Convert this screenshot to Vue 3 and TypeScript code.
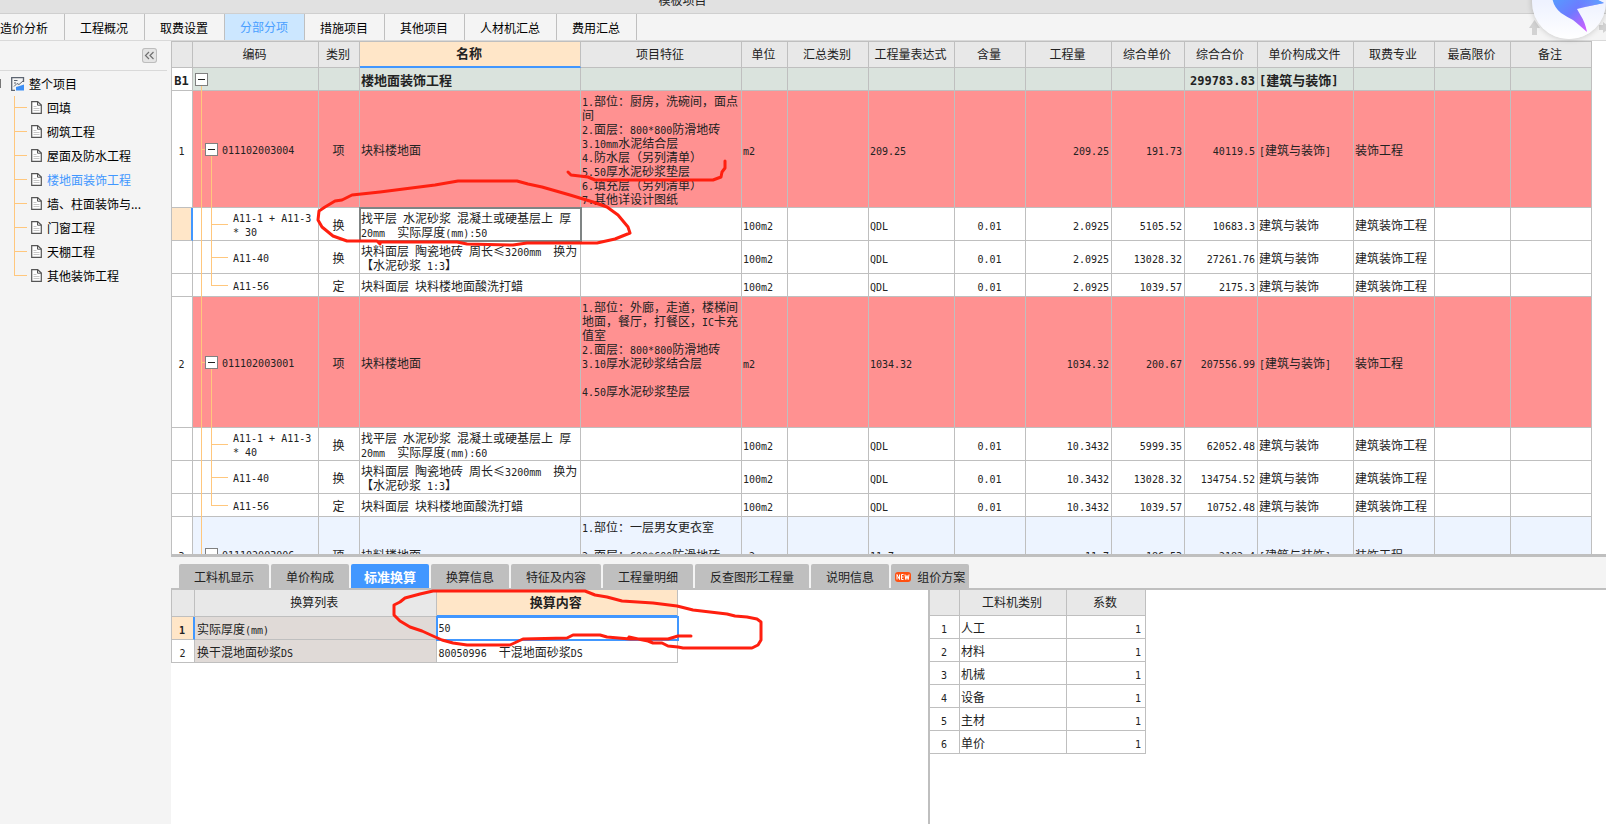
<script setup lang="ts">
import { h, ref, type FunctionalComponent } from 'vue'

type Kind = 'section' | 'item' | 'quota' | 'plain'

interface Column {
  key: string
  label: string
  width: number
  align: 'left' | 'center' | 'right'
}

interface Row {
  no: string
  kind: Kind
  last?: boolean
  selected?: boolean
  cells: Record<string, string>
}

/* Sets Latin runs in the half-width face beside full-width characters. */
const Mixed: FunctionalComponent<{ text: string }> = (props) =>
  (props.text.match(/[\x20-\x7e]+|[^\x20-\x7e]+/g) ?? []).map((run) =>
    /^[\x20-\x7e]/.test(run) ? h('span', { class: 'half' }, run) : run,
  )
Mixed.props = ['text']

const topTabs = ['造价分析', '工程概况', '取费设置', '分部分项', '措施项目', '其他项目', '人材机汇总', '费用汇总']
const activeTop = ref('分部分项')

const tree = ['回填', '砌筑工程', '屋面及防水工程', '楼地面装饰工程', '墙、柱面装饰与...', '门窗工程', '天棚工程', '其他装饰工程']
const activeNode = ref('楼地面装饰工程')

const columns: Column[] = [
  { key: 'code', label: '编码', width: 126, align: 'left' },
  { key: 'type', label: '类别', width: 41, align: 'center' },
  { key: 'name', label: '名称', width: 221, align: 'left' },
  { key: 'feature', label: '项目特征', width: 161, align: 'left' },
  { key: 'unit', label: '单位', width: 46, align: 'left' },
  { key: 'group', label: '汇总类别', width: 81, align: 'left' },
  { key: 'expr', label: '工程量表达式', width: 86, align: 'left' },
  { key: 'content', label: '含量', width: 71, align: 'center' },
  { key: 'qty', label: '工程量', width: 86, align: 'right' },
  { key: 'price', label: '综合单价', width: 73, align: 'right' },
  { key: 'total', label: '综合合价', width: 73, align: 'right' },
  { key: 'file', label: '单价构成文件', width: 96, align: 'left' },
  { key: 'major', label: '取费专业', width: 81, align: 'left' },
  { key: 'limit', label: '最高限价', width: 76, align: 'left' },
  { key: 'note', label: '备注', width: 81, align: 'left' },
]

const item = (code: string, feature: string, qty: string, price: string, total: string) => ({
  code, type: '项', name: '块料楼地面', feature, unit: 'm2', expr: qty, qty, price, total,
  file: '[建筑与装饰]', major: '装饰工程',
})
const quota = (code: string, type: string, name: string, qty: string, price: string, total: string) => ({
  code, type, name, unit: '100m2', expr: 'QDL', content: '0.01', qty, price, total,
  file: '建筑与装饰', major: '建筑装饰工程',
})

const levelling = '找平层 水泥砂浆 混凝土或硬基层上 厚20mm  实际厚度(mm):'
const tiling = '块料面层 陶瓷地砖 周长≤3200mm  换为【水泥砂浆 1:3】'
const waxing = '块料面层 块料楼地面酸洗打蜡'

const rows: Row[] = [
  { no: 'B1', kind: 'section', cells: { name: '楼地面装饰工程', total: '299783.83', file: '[建筑与装饰]' } },
  {
    no: '1', kind: 'item',
    cells: item('011102003004', '1.部位：厨房，洗碗间，面点间\n2.面层：800*800防滑地砖\n3.10mm水泥结合层\n4.防水层（另列清单）\n5.50厚水泥砂浆垫层\n6.填充层（另列清单）\n7.其他详设计图纸', '209.25', '191.73', '40119.5'),
  },
  { no: '', kind: 'quota', selected: true, cells: quota('A11-1 + A11-3 * 30', '换', levelling + '50', '2.0925', '5105.52', '10683.3') },
  { no: '', kind: 'quota', cells: quota('A11-40', '换', tiling, '2.0925', '13028.32', '27261.76') },
  { no: '', kind: 'quota', last: true, cells: quota('A11-56', '定', waxing, '2.0925', '1039.57', '2175.3') },
  {
    no: '2', kind: 'item',
    cells: item('011102003001', '1.部位：外廊，走道，楼梯间地面，餐厅，打餐区，IC卡充值室\n2.面层：800*800防滑地砖\n3.10厚水泥砂浆结合层\n\n4.50厚水泥砂浆垫层\n\n\n', '1034.32', '200.67', '207556.99'),
  },
  { no: '', kind: 'quota', cells: quota('A11-1 + A11-3 * 40', '换', levelling + '60', '10.3432', '5999.35', '62052.48') },
  { no: '', kind: 'quota', cells: quota('A11-40', '换', tiling, '10.3432', '13028.32', '134754.52') },
  { no: '', kind: 'quota', last: true, cells: quota('A11-56', '定', waxing, '10.3432', '1039.57', '10752.48') },
  {
    no: '3', kind: 'plain',
    cells: item('011102003006', '1.部位：一层男女更衣室\n\n2.面层：600*600防滑地砖\n\n\n', '11.7', '186.53', '2182.4'),
  },
]

const lowerTabs = ['工料机显示', '单价构成', '标准换算', '换算信息', '特征及内容', '工程量明细', '反查图形工程量', '说明信息', '组价方案']
const activeLower = ref('标准换算')
const thickness = ref('50')
const factors = ['人工', '材料', '机械', '设备', '主材', '单价']
</script>

<template>
  <div class="app">
    <header class="title-bar"><span class="title">模板项目</span></header>

    <nav class="top-tabs">
      <button
        v-for="tab in topTabs" :key="tab" type="button" class="top-tab"
        :class="{ active: tab === activeTop }" @click="activeTop = tab"
      >{{ tab }}</button>
      <div class="movers">
        <button type="button" class="mover" aria-label="上移">
          <svg width="11" height="15" viewBox="0 0 11 15"><path d="M5.500 0 11 8H8v7H3V8H0z" fill="#d2d2d2" /></svg>
        </button>
        <button type="button" class="mover" aria-label="右移">
          <svg width="11" height="15" viewBox="0 0 11 15"><path d="M0 5h4V2l7 5.500-7 5.500V10H0z" fill="#d2d2d2" /></svg>
        </button>
      </div>
    </nav>

    <div class="body">
      <aside class="sidebar">
        <div class="side-head">
          <button type="button" class="collapse" aria-label="折叠">
            <svg width="15" height="15" viewBox="0 0 15 15" fill="none" stroke="#707070" stroke-width="1.200">
              <path d="M7 4 3.500 7.500 7 11M11.500 4 8 7.500l3.500 3.500" />
            </svg>
          </button>
        </div>
        <button type="button" class="root-node">
          <i class="root-mark"></i>
          <svg width="14" height="14" viewBox="0 0 14 14" fill="none">
            <path d="M12.500 5V.700H.700v12.600H4" stroke="#5c6470" stroke-width="1.300" />
            <path d="M3 3.500h3.500M3 6h2M3 9.500l3-3 2 1L12 4" stroke="#5c6470" stroke-width="1" />
            <path d="M5 13.500V10l3.500-1L13 7.500v6z" fill="#3d8ff5" />
          </svg>
          <span>整个项目</span>
        </button>
        <ul class="tree">
          <li v-for="node in tree" :key="node">
            <button type="button" class="node" :class="{ active: node === activeNode }" @click="activeNode = node">
              <svg width="11" height="13" viewBox="0 0 11 13" fill="none">
                <path d="M.700.700h6L10.300 4v8.300H.700z" fill="#fff" stroke="#555" stroke-width="1.200" />
                <path d="M6.500.700V4.200h3.800" stroke="#555" />
                <path d="M2.500 5.500h3M2.500 7.500h6M2.500 9.500h6" stroke="#c8c8c8" />
              </svg>
              <span>{{ node }}</span>
            </button>
          </li>
        </ul>
      </aside>

      <main class="content">
        <section class="sheet-pane">
          <table class="grid sheet">
            <colgroup>
              <col style="width: 21px" />
              <col v-for="c in columns" :key="c.key" :style="{ width: c.width + 'px' }" />
            </colgroup>
            <thead>
              <tr>
                <th></th>
                <th v-for="c in columns" :key="c.key" :class="{ current: c.key === 'name' }">{{ c.label }}</th>
              </tr>
            </thead>
            <tbody>
              <tr v-for="(r, i) in rows" :key="i" :class="[r.kind, { last: r.last, selected: r.selected }]">
                <td class="gutter"><Mixed :text="r.no" /></td>
                <td v-for="c in columns" :key="c.key" :class="[c.align, 'c-' + c.key]">
                  <div v-if="c.key === 'code'" class="code">
                    <button v-if="r.kind !== 'quota'" type="button" class="toggle" aria-label="收起"></button>
                    <span><Mixed :text="r.cells.code ?? ''" /></span>
                  </div>
                  <Mixed v-else :text="r.cells[c.key] ?? ''" />
                </td>
              </tr>
            </tbody>
          </table>
        </section>

        <div class="splitter"></div>

        <section class="lower">
          <div class="lower-tabs">
            <button
              v-for="tab in lowerTabs" :key="tab" type="button" class="lower-tab"
              :class="{ active: tab === activeLower, fresh: tab === '组价方案' }" @click="activeLower = tab"
            >
              <svg v-if="tab === '组价方案'" class="new" width="16" height="10" viewBox="0 0 16 10">
                <rect width="16" height="10" rx="3" fill="#ff4f0f" />
                <path d="M2 7.500v-5l2.500 5v-5M8.500 2.500h-2v5h2M6.500 5h2M10 2.500l.800 5 1.200-4 1.200 4 .800-5" fill="none" stroke="#fff" />
              </svg>
              {{ tab }}
            </button>
          </div>

          <div class="panes">
            <div class="pane">
              <table class="grid convert">
                <colgroup><col class="w-no" /><col /><col /></colgroup>
                <thead>
                  <tr><th></th><th>换算列表</th><th class="current">换算内容</th></tr>
                </thead>
                <tbody>
                  <tr class="selected">
                    <td class="gutter"><Mixed text="1" /></td>
                    <td class="shade"><label for="thickness"><Mixed text="实际厚度(mm)" /></label></td>
                    <td class="editor"><input id="thickness" v-model="thickness" type="text" /></td>
                  </tr>
                  <tr>
                    <td class="gutter"><Mixed text="2" /></td>
                    <td class="shade"><Mixed text="换干混地面砂浆DS" /></td>
                    <td><Mixed text="80050996  干混地面砂浆DS" /></td>
                  </tr>
                </tbody>
              </table>
            </div>
            <div class="pane divided">
              <table class="grid factor">
                <colgroup><col class="w-no" /><col class="w-kind" /><col /></colgroup>
                <thead>
                  <tr><th></th><th>工料机类别</th><th>系数</th></tr>
                </thead>
                <tbody>
                  <tr v-for="(f, i) in factors" :key="f">
                    <td class="gutter"><Mixed :text="String(i + 1)" /></td>
                    <td>{{ f }}</td>
                    <td class="right"><Mixed text="1" /></td>
                  </tr>
                </tbody>
              </table>
            </div>
          </div>
        </section>
      </main>
    </div>

    <div class="assistant">
      <svg width="74" height="74" viewBox="0 0 74 74">
        <defs>
          <linearGradient id="wing" x1="24" y1="30" x2="54" y2="66" gradientUnits="userSpaceOnUse">
            <stop offset="0" stop-color="#559dff" />
            <stop offset=".5" stop-color="#6d7bff" />
            <stop offset="1" stop-color="#d45cff" />
          </linearGradient>
          <linearGradient id="beak" x1="46" y1="0" x2="72" y2="0" gradientUnits="userSpaceOnUse">
            <stop offset="0" stop-color="#4fa8ff" stop-opacity="0" />
            <stop offset="1" stop-color="#4fa8ff" />
          </linearGradient>
        </defs>
        <path d="M20 26q-1 14 9 22 6 4 12 7 5 4 14 12-2-10-6-16l-4-7 8-2 19-4-12-6-10-6z" fill="url(#wing)" />
        <path d="M45 44l8-2 19-4-12-6-10-6h-5z" fill="url(#beak)" />
      </svg>
    </div>

    <svg class="marks" width="780" height="660" viewBox="0 0 780 660">
      <path d="M568 172 571 175 588 177 595 180H713L721 177 722 172 725 168V161" />
      <path d="M380 244 377 241H347L333 236 322 227 318 220 319 211 325 207 335 201 342 200 352 195 380 192 435 185 458 181H517L528 184 542 187 570 195 593 202 607 207 618 215 628 227 630 233 615 239 597 243H527L513 245 467 244 457 242H379" />
      <path d="M691 636H678L668 639H630L607 637 600 635H573L567 638 523 639 510 645H467L453 643 442 640 433 636 422 631 410 627 400 621 394 615V605L400 602 405 598 420 594 433 591H585L595 595 607 597 622 601 653 603 677 606 693 610 727 614 735 616 747 617 757 619 761 622V640L758 645 752 648H683L678 647 668 646 662 643H653L648 641 638 639 629 637" />
    </svg>
  </div>
</template>

<style>
body {
  margin: 0;
}
.half {
  font-family: "DejaVu Sans Mono", monospace;
  font-size: 10px;
  line-height: 0;
}
</style>

<style scoped>
.app {
  position: relative;
  display: flex;
  flex-direction: column;
  height: 100vh;
  overflow: hidden;
  background: #f4f4f4;
  color: #222;
  font: 12px/14px "Noto Sans CJK SC", "Noto Sans", sans-serif;
}
button {
  margin: 0;
  padding: 0;
  border: 0;
  background: none;
  color: inherit;
  font: inherit;
}
svg {
  flex: none;
  display: block;
}

.title-bar {
  display: flex;
  justify-content: center;
  flex: none;
  height: 13px;
  padding-right: 15%;
  overflow: hidden;
  border-bottom: 1px solid #cfcfcf;
  background: #e1e1e1;
}
.title {
  margin-top: -7px;
}

.top-tabs {
  display: flex;
  flex: none;
  height: 26px;
  margin-left: -16px;
  border-bottom: 1px solid #d9d9d9;
}
.top-tab {
  padding: 2px 16px 0 15px;
  border-right: 1px solid #bfbfbf;
  color: #000;
}
.top-tab:first-child {
  padding-left: 16px;
}
.top-tab.active {
  padding-top: 0;
  background: #cce7ff;
  color: #4a9fff;
}
.movers {
  display: flex;
  align-items: center;
  gap: 59px;
  margin: 0 -4px 0 auto;
}

.body {
  display: flex;
  flex: 1;
  min-height: 0;
}
.sidebar {
  flex: none;
  width: 167px;
  margin-right: 4px;
  color: #000;
}
.side-head {
  display: flex;
  justify-content: flex-end;
  padding: 7px 10px 7px 0;
  border-bottom: 1px solid #d9d9d9;
}
.collapse {
  border-radius: 3px;
  background: #e4e4e4;
  box-shadow: inset 0 0 0 1px #bdbdbd;
}
.root-node {
  display: flex;
  align-items: center;
  height: 25px;
}
.root-mark {
  width: 1px;
  height: 9px;
  margin-right: 10px;
  background: #777;
}
.root-node span {
  margin-left: 4px;
}
.tree {
  margin: 0 0 0 14px;
  padding: 0;
  list-style: none;
}
.tree li {
  display: flex;
  height: 24px;
  background:
    linear-gradient(#ffc77d, #ffc77d) 0 0 / 1px 100% no-repeat,
    linear-gradient(#ffc77d, #ffc77d) 0 11px / 13px 1px no-repeat;
}
.tree li:last-child {
  background-size: 1px 12px, 13px 1px;
}
.node {
  display: flex;
  align-items: center;
  gap: 5px;
  padding-left: 17px;
}
.node svg {
  margin-bottom: 2px;
}
.node.active {
  color: #4197ff;
}

.content {
  display: grid;
  grid-template-rows: minmax(0, 513fr) 3px minmax(0, 267fr);
  flex: 1;
  min-width: 0;
}
.sheet-pane {
  overflow: hidden;
  padding-right: 14px;
  background: #fff;
}
.splitter {
  background: #bfbfbf;
}

.grid {
  border-collapse: separate;
  border-spacing: 0;
  border-left: 1px solid #bfbfbf;
  table-layout: fixed;
}
.grid th,
.grid td {
  box-sizing: border-box;
  padding: 3px 0 1px 1px;
  border-right: 1px solid #bfbfbf;
  border-bottom: 1px solid #bfbfbf;
  white-space: pre-wrap;
}
.grid tr {
  height: 23px;
}
.grid thead tr {
  height: 26px;
}
.grid th {
  padding: 0 2px 2px 0;
  background: #e8e8e8;
  font-weight: normal;
}
.grid th.current {
  border-bottom: 2px solid #4197ff;
  background: #ffe6c8;
  font-weight: bold;
  font-size: 13px;
}
.grid td {
  background: #fff;
}
.grid td.gutter {
  padding: 1px 1px 0 0;
  text-align: center;
}
.grid .selected .gutter {
  border-right: 2px solid #4197ff;
  background: #ffe6c8;
}
.grid td.center {
  padding: 3px 1px 1px 0;
  text-align: center;
}
.grid td.right {
  padding: 3px 2px 1px 0;
  text-align: right;
}

.sheet {
  width: 100%;
  border-top: 1px solid #bfbfbf;
}
.sheet .section td:not(.gutter) {
  background: #dae3dd;
}
.sheet .section td {
  font-weight: bold;
  font-size: 13px;
}
.section :deep(.half) {
  font-size: 12px;
}
.sheet .item td:not(.gutter) {
  background: #ff9191;
}
.sheet .plain td:not(.gutter) {
  background: #edf4ff;
}
.sheet .selected .c-name {
  outline: 2px solid #7f8484;
  outline-offset: -1px;
}

/* Outline connectors of the code column */
.sheet td.c-code {
  position: relative;
  padding: 2px 0 2px 2px;
}
.c-code::before,
.c-code::after,
.code::before {
  content: "";
  position: absolute;
  background: #ffc77d;
}
.c-code::before {
  top: 0;
  bottom: -1px;
  left: 8px;
  width: 1px;
}
.section .c-code::before {
  top: 50%;
}
.c-code::after {
  top: 0;
  bottom: -1px;
  left: 18px;
  width: 1px;
}
.section .c-code::after {
  display: none;
}
.item .c-code::after {
  top: 50%;
}
.plain .c-code::before {
  bottom: 50%;
}
.plain .c-code::after {
  top: 50%;
}
.last .c-code::after {
  bottom: 50%;
}
.code::before {
  top: 50%;
  left: 8px;
  width: 5px;
  height: 1px;
}
.section .code::before {
  display: none;
}
.quota .code::before {
  left: 18px;
  width: 17px;
}
.code {
  display: flex;
  align-items: center;
  gap: 4px;
  padding-left: 10px;
}
.section .code {
  padding-left: 0;
}
.quota .code {
  padding-left: 38px;
}
.toggle {
  position: relative;
  z-index: 1;
  flex: none;
  width: 13px;
  height: 13px;
  border: 1px solid #808080;
  background: linear-gradient(#222, #222) center / 7px 1px no-repeat #fff;
}

.lower {
  display: flex;
  flex-direction: column;
}
.lower-tabs {
  display: flex;
  gap: 2px;
  flex: none;
  padding: 7px 0 0 8px;
  border-bottom: 2px solid #bfbfbf;
}
.lower-tab {
  display: flex;
  align-items: center;
  gap: 6px;
  height: 24px;
  padding: 2px 15px 0;
  border-radius: 2px 2px 0 0;
  background: #bfbfbf;
}
.lower-tab.active {
  padding: 2px 13px 0;
  background: #4197ff;
  color: #fff;
  font-weight: bold;
  font-size: 13px;
}
.lower-tab.fresh {
  padding: 2px 4px 0;
}
.panes {
  display: grid;
  grid-template-columns: 757fr 678fr;
  flex: 1;
  background: #fff;
}
.divided {
  border-left: 2px solid #bfbfbf;
}
.convert {
  width: 507px;
}
.convert thead tr {
  height: 27px;
}
.convert .w-no {
  width: 23px;
}
.convert .shade {
  padding-left: 2px;
  background: #e0dad7;
}
.convert td:last-child {
  padding-left: 2px;
}
.convert .selected .gutter {
  font-weight: bold;
}
.convert td.editor {
  padding: 2px 0 0;
  outline: 2px solid #4197ff;
  outline-offset: -1px;
}
.editor input {
  display: block;
  box-sizing: border-box;
  width: 100%;
  height: 18px;
  padding: 0 2px;
  border: 0;
  outline: 0;
  background: none;
  color: inherit;
  font: 10px/18px "DejaVu Sans Mono", monospace;
}
.factor {
  width: 216px;
  border-left: 0;
}
.factor .w-no {
  width: 30px;
}
.factor .w-kind {
  width: 107px;
}
.factor td.right {
  padding-right: 4px;
}

.assistant {
  position: absolute;
  top: -35px;
  right: 0;
  border-radius: 50%;
  background: linear-gradient(#eef2ff 50%, #fff);
  box-shadow: 0 0 6px rgba(0, 0, 0, 0.2);
}
.marks {
  position: absolute;
  top: 0;
  left: 0;
  pointer-events: none;
  fill: none;
  stroke: #ff1f0f;
  stroke-width: 3;
  stroke-linecap: round;
  stroke-linejoin: round;
}
</style>
